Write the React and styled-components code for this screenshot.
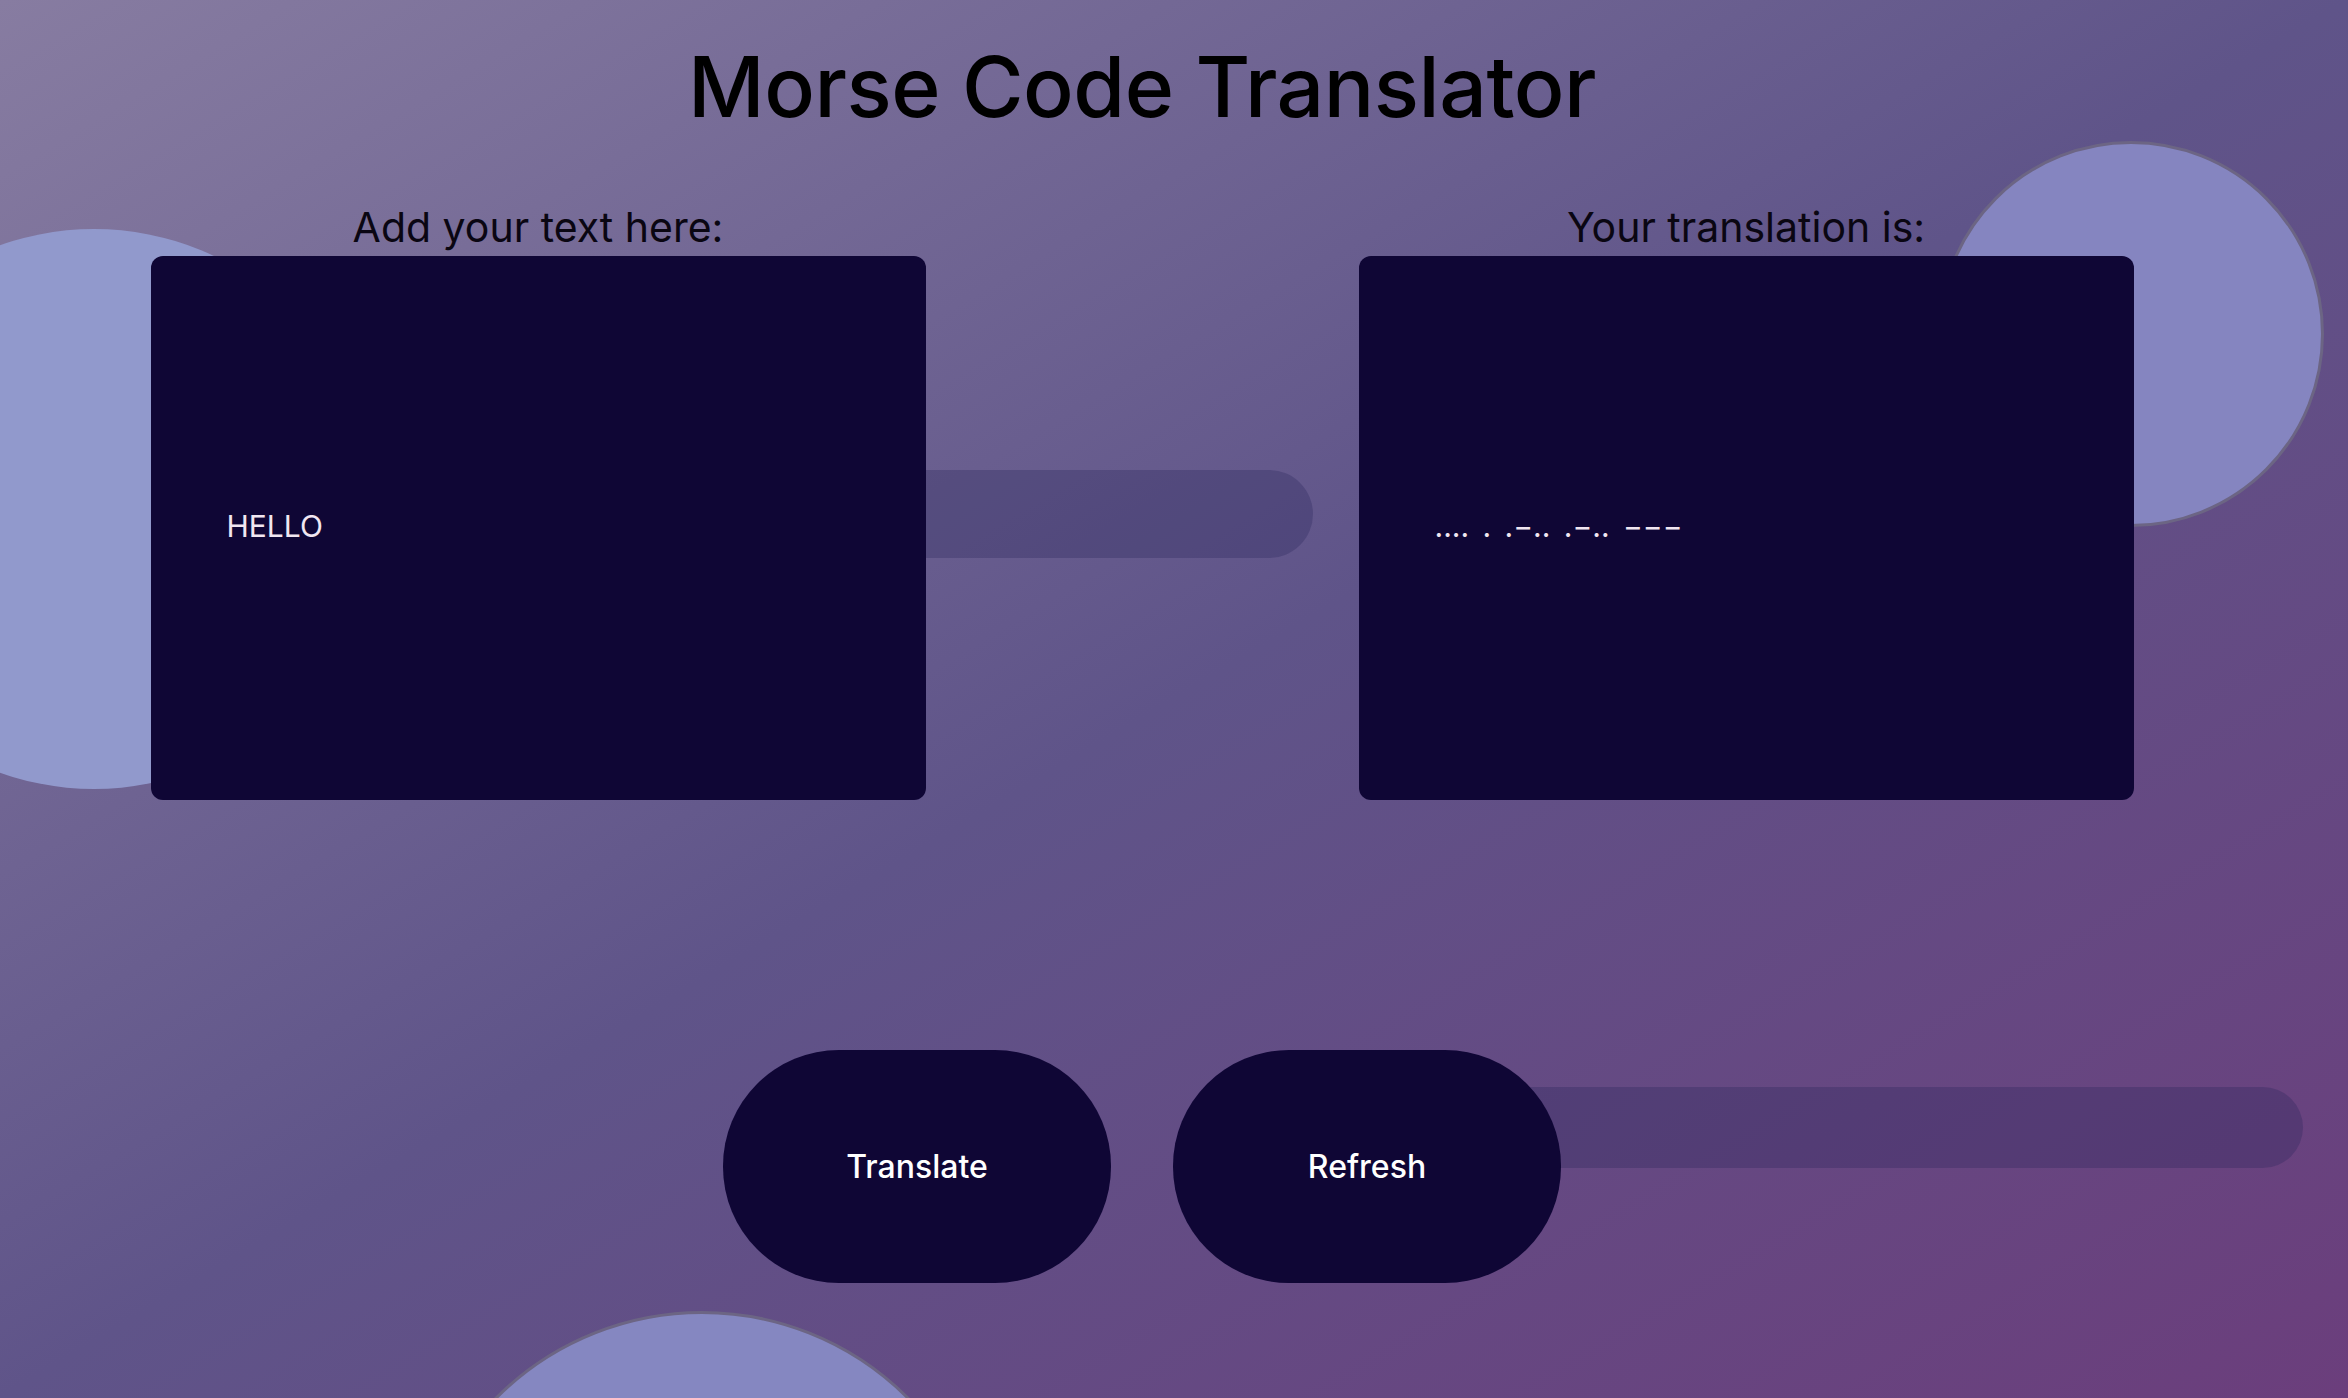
import React, { useState } from "react";
import styled, { createGlobalStyle } from "styled-components";

const GlobalStyle = createGlobalStyle`
  html, body {
    margin: 0;
    padding: 0;
  }
  body {
    font-family: "Inter", "Noto Sans", sans-serif;
  }
  * {
    box-sizing: border-box;
  }
`;

const Page = styled.div`
  position: relative;
  min-height: 100vh;
  height: 1398px;
  overflow: hidden;
  background: linear-gradient(to bottom right, #877ca1 0%, #5f5489 50%, #6b3e7c 100%);
`;

// decorative blobs behind the content
const Circle = styled.div`
  position: absolute;
  left: ${(p) => p.x}px;
  top: ${(p) => p.y}px;
  width: ${(p) => p.size}px;
  height: ${(p) => p.size}px;
  border-radius: 50%;
  background: ${(p) => p.color};
  border: ${(p) => (p.ring ? "3px solid #6c6584" : "none")};
  z-index: 0;
`;

const Main = styled.main`
  position: relative;
  z-index: 1;
  display: flex;
  flex-direction: column;
  align-items: center;
  padding-right: 64px;
`;

const Title = styled.h1`
  margin: 37px 0 0;
  font-size: 84px;
  font-weight: 500;
  line-height: 1.2;
  color: #000;
  letter-spacing: -0.5px;
`;

const Panels = styled.section`
  display: grid;
  grid-template-columns: 775px 775px;
  column-gap: 433px;
  margin-top: 62px;
`;

const Panel = styled.div`
  position: relative;
  display: flex;
  flex-direction: column;
  align-items: center;
`;

const Label = styled.label`
  font-size: 41px;
  font-weight: 400;
  line-height: 54px;
  color: #0a0612;
  margin-bottom: 2px;
`;

// the translucent bar that sticks out behind a box or button
const Bar = styled.div`
  position: absolute;
  left: ${(p) => p.left}px;
  top: ${(p) => p.top}px;
  width: ${(p) => p.width}px;
  height: ${(p) => p.height}px;
  border-radius: 0 ${(p) => p.height / 2}px ${(p) => p.height / 2}px 0;
  background: rgba(40, 35, 90, 0.3);
  z-index: -1;
`;

const TextBox = styled.textarea`
  width: 775px;
  height: 544px;
  border: none;
  outline: none;
  resize: none;
  border-radius: 12px;
  background: #0f0635;
  color: #f1e6f1;
  font-family: "Inter", "Noto Sans", sans-serif;
  font-size: 30px;
  line-height: 40px;
  word-spacing: 5px;
  padding: 250px 76px 0;
  overflow: hidden;
`;

const Actions = styled.div`
  position: relative;
  display: flex;
  gap: 62px;
  margin-top: 250px;
`;

const Button = styled.button`
  width: 388px;
  height: 233px;
  border: none;
  border-radius: 116px / 116px;
  background: #0f0635;
  color: #fff;
  font-family: "Inter", "Noto Sans", sans-serif;
  font-size: 32px;
  font-weight: 500;
  cursor: pointer;
`;

const toMorse = {
  A: ".−", B: "−...", C: "−.−.", D: "−..", E: ".", F: "..−.", G: "−−.", H: "....",
  I: "..", J: ".−−−", K: "−.−", L: ".−..", M: "−−", N: "−.", O: "−−−", P: ".−−.",
  Q: "−−.−", R: ".−.", S: "...", T: "−", U: "..−", V: "...−", W: ".−−", X: "−..−",
  Y: "−.−−", Z: "−−..",
};

const translate = (text) =>
  text
    .toUpperCase()
    .split("")
    .map((c) => (c === " " ? "/" : toMorse[c] || ""))
    .join(" ");

export default function App() {
  const [text, setText] = useState("HELLO");
  const [result, setResult] = useState(translate("HELLO"));

  return (
    <>
      <GlobalStyle />
      <Page>
        <Circle x={-186} y={229} size={560} color="#9199cc" />
        <Circle x={1938} y={141} size={386} color="#8585c0" ring />
        <Circle x={410} y={1311} size={584} color="#8587c1" ring />

        <Main>
          <Title>Morse Code Translator</Title>

          <Panels>
            <Panel>
              <Label htmlFor="input">Add your text here:</Label>
              <Bar left={700} top={270} width={462} height={88} />
              <TextBox id="input" value={text} onChange={(e) => setText(e.target.value)} />
            </Panel>
            <Panel>
              <Label htmlFor="output">Your translation is:</Label>
              <TextBox id="output" value={result} readOnly />
            </Panel>
          </Panels>

          <Actions>
            <Button onClick={() => setResult(translate(text))}>Translate</Button>
            <Button
              onClick={() => {
                setText("");
                setResult("");
              }}
            >
              Refresh
            </Button>
            <Bar left={700} top={37} width={880} height={81} />
          </Actions>
        </Main>
      </Page>
    </>
  );
}
